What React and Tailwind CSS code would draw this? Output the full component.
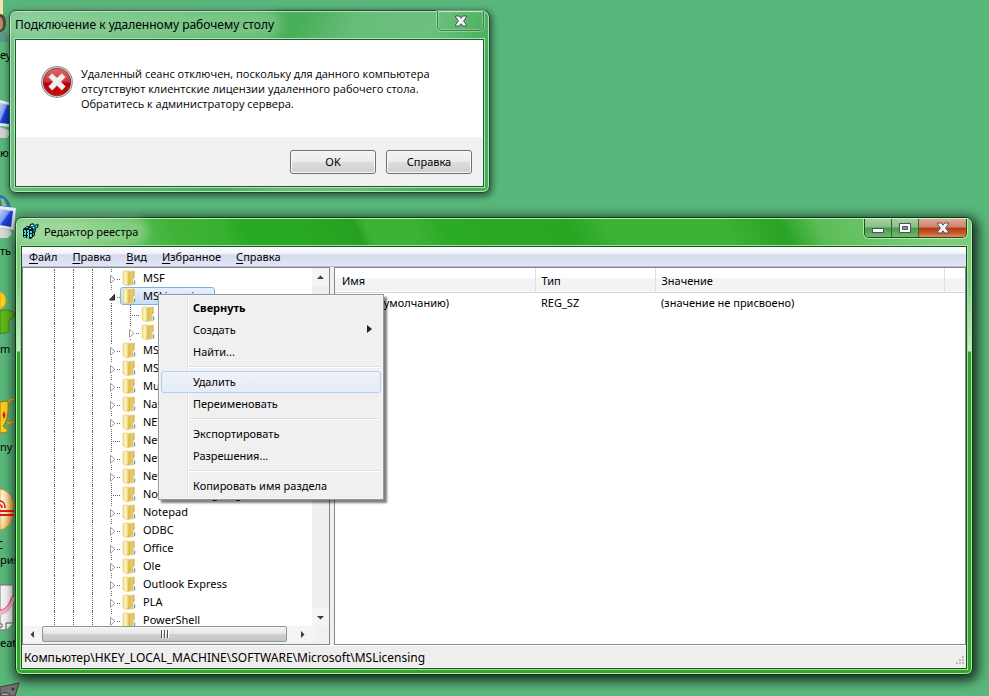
import React from "react";
import clsx from "clsx";

const treeRows = [
  { name: "MSF", arrow: "closed" },
  { name: "MSLicensing", arrow: "open", selected: true },
  { name: "HardwareID", child: true },
  { name: "Store", arrow: "closed", child: true },
  { name: "MSN Apps", arrow: "closed" },
  { name: "MSSQLServer", arrow: "closed" },
  { name: "Multimedia", arrow: "closed" },
  { name: "NapServer", arrow: "closed" },
  { name: "NET Framework Setup", arrow: "closed" },
  { name: "NetSh" },
  { name: "Network", arrow: "closed" },
  { name: "NetworkMap", arrow: "closed" },
  { name: "Non-Driver Signing" },
  { name: "Notepad", arrow: "closed" },
  { name: "ODBC", arrow: "closed" },
  { name: "Office", arrow: "closed" },
  { name: "Ole", arrow: "closed" },
  { name: "Outlook Express", arrow: "closed" },
  { name: "PLA", arrow: "closed" },
  { name: "PowerShell", arrow: "closed" },
];

const contextItems = [
  { label: "Свернуть", bold: true },
  { label: "Создать", submenu: true },
  { label: "Найти..." },
  null,
  { label: "Удалить", active: true },
  { label: "Переименовать" },
  null,
  { label: "Экспортировать" },
  { label: "Разрешения..." },
  null,
  { label: "Копировать имя раздела" },
];

const menus = ["Файл", "Правка", "Вид", "Избранное", "Справка"];

const CloseGlyph = () => (
  <svg width="14" height="12" viewBox="0 0 14 12">
    <path
      d="M1.5 1h3.800L7 3.200 8.700 1h3.800v1L9.600 6l2.900 4v1H8.700L7 8.800 5.300 11H1.500v-1L4.400 6 1.500 2z"
      fill="#f4f4f4"
      stroke="#4b5163"
      strokeWidth="1"
    />
  </svg>
);

const FolderIcon = () => (
  <svg width="16" height="16" viewBox="0 0 16 16" className="shrink-0">
    <defs>
      <linearGradient id="folderBack" x1="0" x2="1">
        <stop offset="0" stopColor="#f0dc86" />
        <stop offset=".5" stopColor="#e9d174" />
        <stop offset="1" stopColor="#d8b650" />
      </linearGradient>
      <linearGradient id="folderFront" x1="0" x2="1">
        <stop offset="0" stopColor="#f1dd85" />
        <stop offset=".5" stopColor="#fdf7c0" />
        <stop offset="1" stopColor="#e5ca62" />
      </linearGradient>
    </defs>
    <path d="M5 1.500L12.500 1v13.500L6 15.500z" fill="url(#folderBack)" stroke="#dcc97c" strokeWidth=".6" />
    <path d="M1 1.500L5 .7l1.500 1.500v12L5 15.700 1 14z" fill="url(#folderFront)" stroke="#dcc876" strokeWidth=".6" />
    <path d="M7 2l1.500-.5v12.500L5 15.700 6.500 14z" fill="#d9b850" />
    <path d="M11.500 8h1.500v6h-1.500z" fill="#fff" />
    <path d="M12 10.500h1.200V14H12z" fill="#46a5e2" />
  </svg>
);

const Toggle = ({ arrow }) => (
  <svg width="14" height="18" viewBox="0 0 14 18" className="shrink-0">
    {arrow ? (
      <g fill="#666">
        <path d="M5 0h1v1H5zM5 2h1v1H5zM5 16h1v1H5zM11 10h1v1h-1zM13 10h1v1h-1z" />
      </g>
    ) : (
      <g stroke="#666" strokeDasharray="1 1">
        <path d="M5.500 0v18M5 10.500h9" />
      </g>
    )}
    {arrow === "closed" && (
      <path d="M4.500 6.300v8l4.300-4z" fill="#fff" stroke="#9a9a9a" />
    )}
    {arrow === "open" && <path d="M8.500 7.500v5.500H3.500z" fill="#404040" stroke="#262626" />}
  </svg>
);

const Guide = ({ last }) => (
  <span
    className={clsx(
      "shrink-0 border-l border-dotted border-[#666]",
      last ? "w-[14px]" : "w-[19px]"
    )}
  />
);

const TreeRow = ({ name, arrow, child, selected }) => (
  <li className="flex h-[18px] pl-[31px]">
    <Guide />
    <Guide />
    {child && <Guide />}
    <Guide last />
    <Toggle arrow={arrow} />
    <button
      className={clsx(
        "flex items-center gap-[5px] whitespace-nowrap rounded-[3px] border pl-px pr-1.5",
        selected
          ? "border-[#84acdd] bg-linear-to-b from-[#e8f1fd] to-[#c6defb]"
          : "border-transparent"
      )}
    >
      <FolderIcon />
      <span className="pb-0.5">{name}</span>
    </button>
  </li>
);

const ScrollArrow = ({ d, label, className }) => (
  <button aria-label={label} className={clsx("flex items-center justify-center bg-[#f4f4f4]", className)}>
    <svg width="7" height="7" viewBox="0 0 7 7">
      <path d={d} fill="#3c3c3c" />
    </svg>
  </button>
);

const DialogButton = ({ children }) => (
  <button className="h-6 w-[86px] rounded-[3px] border border-[#707070] bg-[linear-gradient(#f3f3f3_0%,#ebebeb_50%,#dddddd_50%,#cfcfcf_100%)] text-center shadow-[inset_0_0_0_1px_#fafafa]">
    {children}
  </button>
);

const ErrorIcon = () => (
  <svg width="32" height="32" viewBox="0 0 32 32" className="shrink-0">
    <defs>
      <linearGradient id="errorRed" x1="0" y1="0" x2="0" y2="1">
        <stop offset="0" stopColor="#e0686b" />
        <stop offset=".48" stopColor="#cc363a" />
        <stop offset=".55" stopColor="#b40005" />
        <stop offset="1" stopColor="#c8140c" />
      </linearGradient>
    </defs>
    <circle cx="16" cy="16" r="15.300" fill="#f2f2f2" stroke="#8f9499" strokeWidth="1.200" />
    <circle cx="16" cy="16" r="13.800" fill="url(#errorRed)" stroke="#8d1a1c" strokeWidth=".8" />
    <path
      d="M7.500 11l3.700-3.500L16 12l4.800-4.500 3.700 3.500-4.700 4.800 4.700 4.700-3.700 3.700L16 19.600l-4.800 4.600-3.700-3.700 4.700-4.700z"
      fill="#efefef"
      stroke="#d6b5b5"
      strokeWidth=".5"
    />
  </svg>
);

const RegeditIcon = () => (
  <svg width="16" height="16" viewBox="0 0 16 16">
    <path d="M0 6l4-3 8 1v8l-4 4-8-2z" fill="#111" />
    <path
      d="M1 7h2v2H1zM4 7h2v2H4zM7 8h2v2H7zM1 10h2v2H1zM4 10h2v2H4zM1 13h2v1H1zM4 13h2v2H4zM7 11h2v3H7zM3 4h2v1H3zM6 5h2v1H6zM10 7h1v2h-1zM10 10h1v2h-1z"
      fill="#35dfe2"
    />
    <path d="M7 1.500l3-1 2 2 3-1.500v3l-2.500 1.500v3L10 10V6L7 4z" fill="#0a7d80" stroke="#111" strokeWidth=".8" />
    <path d="M8 2h2v1H8zM13 2.500h1v1h-1zM10 4h1v1h-1zM2 9h1v1H2zM5 9h1v1H5zM5 12h1v1H5z" fill="#bff" />
  </svg>
);

/* Shortcuts on the left edge of the desktop, mostly off-screen */
const DesktopIcons = () => (
  <div className="absolute left-0 top-0">
    <svg width="20" height="696" viewBox="0 0 20 696">
      <defs>
        <linearGradient id="screen" x1="0" y1="0" x2="1" y2="1">
          <stop offset="0" stopColor="#c3d3fb" />
          <stop offset=".4" stopColor="#7f9df2" />
          <stop offset=".5" stopColor="#1f41d6" />
          <stop offset="1" stopColor="#0b2bb4" />
        </linearGradient>
        <radialGradient id="ball" cx="0" cy=".35" r="1">
          <stop offset="0" stopColor="#fffdf4" />
          <stop offset=".5" stopColor="#fbe3ae" />
          <stop offset="1" stopColor="#f09a1c" />
        </radialGradient>
      </defs>
      <path d="M0 0h3v24H0z" fill="#f7e3ad" />
      <path d="M0 14c4 0 6 4 6 9s-2 9-6 9z" fill="#4f4339" />
      <path d="M0 17c2 0 3 3 3 7s-1 5-3 6z" fill="#b98a60" />
      <path d="M0 33l4-3c3 2 5 6 5 12H0z" fill="#5f9a8d" />

      <path d="M0 100l12 3v24l-12-1z" fill="#e8ebf2" />
      <path d="M0 103l9 2v19l-9-1z" fill="url(#screen)" />
      <path d="M0 127l8 3 2 4-3 4H0z" fill="#d3d3d3" />

      <path d="M0 195c6 1 10 6 11 14H0z" fill="#3568b8" />
      <path d="M0 198l4 1 3 7H2z" fill="#7fc069" />
      <path d="M0 206l16 2-2 22-14-2z" fill="#e8ebf2" />
      <path d="M0 209l13 2-2 16-11-2z" fill="url(#screen)" />
      <path d="M0 228l10 2 2 4-4 4H0z" fill="#dadada" />

      <path d="M0 311c5-2 11-1 15 2l-3 6-3 1v12l-9 2z" fill="#62b81b" stroke="#3e8c10" />
      <path d="M0 292c4 1 6 5 6 9s-3 7-6 8z" fill="#ffd21e" stroke="#d9a514" />

      <path d="M8 404c0-3 3-5 6-5M7 422c2 2 4 1 7-1" fill="none" stroke="#c98a10" strokeWidth="3" />
      <path d="M8 404c0-3 3-5 6-5M7 422c2 2 4 1 7-1" fill="none" stroke="#fbdc50" />
      <path d="M0 402l8-1c1 12-1 21-5 25l5 4c0 2-3 3-8 3z" fill="#f8d21e" stroke="#a96f09" />
      <path d="M4 411l1.500 4L4 419l-1.500-4z" fill="#d3151b" />

      <path d="M0 489c9 1 14 9 14 20s-6 20-14 21z" fill="url(#ball)" stroke="#d18a18" strokeWidth=".7" />
      <path d="M0 501c3 0 5 3 5 7M0 505c1 0 2 1 2 3" fill="none" stroke="#e01c1c" strokeWidth="1.500" />
      <path d="M0 511h14M0 515h14" stroke="#e01c1c" strokeWidth="2" />

      <path d="M0 585h13v38l-7 7H0z" fill="#f4f4f4" stroke="#777" />
      <path d="M0 613c7 0 10-7 13-16" fill="none" stroke="#f6b3c9" strokeWidth="4" />
      <path d="M0 610c6 0 10-7 13-15" fill="none" stroke="#e5336f" />
      <path d="M6 630v-7h7M0 624h2v3H0" fill="#fff" stroke="#555" />

      <path d="M0 687l19-4-4 13H0z" fill="#737373" stroke="#3f3f3f" />
      <path d="M0 695c3-3 7-3 10 0" fill="#aaa" stroke="#333" />
      <circle cx="13" cy="689" r="1.500" fill="#2b3b20" />
    </svg>
    <span className="absolute left-0 top-[47px]">еу</span>
    <span className="absolute left-0 top-[145px]">ю</span>
    <span className="absolute left-0 top-[243px]">ть</span>
    <span className="absolute left-0 top-[341px]">m</span>
    <span className="absolute left-0 top-[439px]">ny</span>
    <span className="absolute -left-1 top-[537px]">С</span>
    <span className="absolute left-0 top-[552px]">рия</span>
    <span className="absolute left-0 top-[635px]">eat</span>
  </div>
);

const ErrorDialog = () => (
  <section
    aria-label="Подключение к удаленному рабочему столу"
    className="absolute left-[9px] top-[10px] flex w-[481px] flex-col rounded-[7px] border border-[#1d4a2c] bg-[linear-gradient(115deg,#74c586_0%,#62bd74_20%,#52b663_44%,#48ae59_52%,#66bd78_62%,#6cc07e_76%,#45b058_88%)] px-[5px] pb-[5px] shadow-[inset_0_0_0_1px_#b5e3bd,1px_2px_7px_1px_rgba(0,0,0,0.55)]"
  >
    <header className="flex h-7 items-start justify-between">
      <h1 className="mt-1.5 rounded-full bg-white/20 text-xs leading-[15px] shadow-[0_0_9px_7px_rgba(255,255,255,0.2)]">
        Подключение к удаленному рабочему столу
      </h1>
      <button
        aria-label="Закрыть"
        className="flex h-5 w-[47px] items-center justify-center rounded-b-[5px] border border-t-0 border-[#3d7e4c] shadow-[inset_0_0_0_1px_rgba(255,255,255,0.25),0_0_0_1px_rgba(200,240,205,0.5)]"
      >
        <CloseGlyph />
      </button>
    </header>
    <div className="border border-[#1d5a2b] shadow-[0_0_0_1px_#b0e2b8]">
      <div className="flex h-[97px] gap-2 bg-white pl-[25px] pt-[26px]">
        <ErrorIcon />
        <p className="font-['Open_Sans','Noto_Sans',sans-serif]">
          Удаленный сеанс отключен, поскольку для данного компьютера
          <br />
          отсутствуют клиентские лицензии удаленного рабочего стола.
          <br />
          Обратитесь к администратору сервера.
        </p>
      </div>
      <div className="flex h-[49px] items-center justify-end gap-2.5 bg-[#f0f0f0] pr-[11px]">
        <DialogButton>OK</DialogButton>
        <DialogButton>Справка</DialogButton>
      </div>
    </div>
  </section>
);

const ContextMenu = () => (
  <ul
    role="menu"
    className="absolute left-[142px] top-[76px] w-[226px] border border-[#979797] bg-[#f0f0f0] bg-[linear-gradient(90deg,transparent_28px,#e2e3e3_28px,#e2e3e3_29px,#fff_29px,#fff_30px,transparent_30px)] p-0.5 shadow-[inset_0_0_0_1px_#f5f5f5,3px_3px_2px_rgba(0,0,0,0.5)]"
  >
    {contextItems.map((item, i) =>
      item ? (
        <li key={i} role="none">
          <button
            role="menuitem"
            className={clsx(
              "flex h-[22px] w-full items-center justify-between rounded-[3px] border pb-0.5 pl-[31px] pr-2",
              item.active
                ? "border-[#aecff7] bg-linear-to-b from-[#f0f3f8]/80 to-[#e2ebf6]/80"
                : "border-transparent",
              item.bold && "font-bold"
            )}
          >
            {item.label}
            {item.submenu && (
              <svg width="5" height="8" viewBox="0 0 5 8">
                <path d="M0 0l5 4-5 4z" fill="#222" />
              </svg>
            )}
          </button>
        </li>
      ) : (
        <li key={i} role="separator" className="flex h-2 items-center pl-7">
          <span className="h-0.5 w-full border-b border-white bg-[#e0e0e0]" />
        </li>
      )
    )}
  </ul>
);

const Tree = () => (
  <nav
    aria-label="Разделы реестра"
    className="flex w-[308px] shrink-0 flex-col border border-[#828790] bg-white"
  >
    <div className="flex min-h-0 flex-1">
      <ul className="min-w-0 flex-1 overflow-hidden pt-px">
        {treeRows.map((row) => (
          <TreeRow key={row.name} {...row} />
        ))}
      </ul>
      <div className="flex w-[17px] shrink-0 flex-col justify-between bg-[#efefef]">
        <ScrollArrow label="Вверх" d="M0 5h7L3.500 1.500z" className="h-[18px]" />
        <ScrollArrow label="Вниз" d="M0 2h7L3.500 5.500z" className="h-[18px]" />
      </div>
    </div>
    <div className="flex h-[18px] shrink-0 bg-[#f0f0f0] pb-0.5 pr-3">
      <ScrollArrow label="Влево" d="M5 0v7L1.500 3.500z" className="w-[19px]" />
      <div className="flex w-[245px] items-center justify-center gap-px rounded-[2px] border border-[#979797] bg-[linear-gradient(#f5f5f5_0%,#e6e6e6_50%,#d2d2d2_50%,#c4c4c6_100%)]">
        <span className="h-2 w-0.5 border-l border-[#555] bg-white" />
        <span className="h-2 w-0.5 border-l border-[#555] bg-white" />
        <span className="h-2 w-0.5 border-l border-[#555] bg-white" />
      </div>
      <ScrollArrow label="Вправо" d="M2 0v7L5.500 3.500z" className="flex-1" />
    </div>
  </nav>
);

const ValueList = () => (
  <div className="min-w-0 flex-1 border border-[#828790] bg-white">
    <table className="w-full table-fixed border-collapse text-left">
      <thead>
        <tr className="h-6 border-b border-[#d5d5d5] bg-[linear-gradient(#ffffff_45%,#f4f5f7_45%,#f1f2f4_100%)]">
          <th className="w-[200px] border-r border-[#dedfe1] pl-[7px] pt-px font-normal">Имя</th>
          <th className="w-[120px] border-r border-[#dedfe1] pl-1.5 pt-px font-normal">Тип</th>
          <th className="border-r border-[#dedfe1] pl-1.5 pt-px font-normal">Значение</th>
          <th className="w-[21px]" />
        </tr>
      </thead>
      <tbody>
        <tr className="h-5">
          <td className="pl-7">(По умолчанию)</td>
          <td className="pl-1.5">REG_SZ</td>
          <td className="pl-1.5">(значение не присвоено)</td>
          <td />
        </tr>
      </tbody>
    </table>
  </div>
);

const RegistryWindow = () => (
  <section
    aria-label="Редактор реестра"
    className="absolute bottom-[21px] left-[15px] right-4 top-[217px] flex flex-col rounded-[7px] border border-[#0c3a12] bg-[linear-gradient(180deg,#7acb78_0,#80cc7e_60px,#c6eac4_133px,#2fa829_134px)] px-[5px] pb-[5px] shadow-[inset_0_0_0_1px_#b5e8b3,2px_3px_12px_3px_rgba(0,0,0,0.75)]"
  >
    <header className="-mx-1 mt-px flex h-[27px] shrink-0 items-start justify-between rounded-t-[5px] bg-[linear-gradient(65deg,#7bcb79_0%,#7bcb79_6%,#3fb338_17%,#38b032_22%,#29aa24_24%,#29aa24_29%,#27a021_36%,#3bb135_37%,#3bb135_42%,#2cab26_45%,#29a524_58%,#3cb236_62%,#3cb236_74%,#29a324_80%,#5cbd58_84%,#7ccc7a_95%)] px-1"
    >
      <h2 className="mt-1 flex items-center gap-[5px] rounded-full bg-white/25 pl-0.5 pr-1 shadow-[0_0_9px_6px_rgba(255,255,255,0.25)]">
        <RegeditIcon />
        Редактор реестра
      </h2>
      <div className="flex h-[19px] rounded-b-[5px] border border-t-0 border-[#1f4c20] shadow-[0_0_0_1px_rgba(210,245,210,0.7)]">
        <button
          aria-label="Свернуть окно"
          className="flex w-[27px] items-center justify-center rounded-bl-[4px] border-r border-[#33663a] bg-[linear-gradient(#a4d2a1_0%,#86bf84_45%,#4c9a4a_50%,#6fbb6c_100%)]"
        >
          <svg width="12" height="12" viewBox="0 0 12 12">
            <path d="M.5 6.500h11v4H.5z" fill="#fff" stroke="#4b5163" />
          </svg>
        </button>
        <button
          aria-label="Развернуть"
          className="flex w-[27px] items-center justify-center border-r border-[#33663a] bg-[linear-gradient(#a4d2a1_0%,#86bf84_45%,#4c9a4a_50%,#6fbb6c_100%)]"
        >
          <svg width="12" height="10" viewBox="0 0 12 10">
            <path d="M.5.5h11v9H.5z" fill="#fff" stroke="#4b5163" />
            <path d="M3.500 3.500h5v3h-5z" fill="#79a87c" stroke="#4b5163" />
          </svg>
        </button>
        <button
          aria-label="Закрыть"
          className="flex w-[47px] items-center justify-center rounded-br-[4px] bg-[linear-gradient(#e3a896_0%,#cf836c_45%,#b53a12_50%,#c95a2e_80%,#db8f62_100%)]"
        >
          <CloseGlyph />
        </button>
      </div>
    </header>
    <div className="flex min-h-0 flex-1 flex-col border border-[#14551a] bg-[#f0f0f0] shadow-[0_0_0_1px_#a5dfa3]">
      <div
        role="menubar"
        className="flex h-5 shrink-0 gap-px border-b border-[#b6bccc] bg-[linear-gradient(#ffffff_0%,#eef1f8_38%,#d4dbed_40%,#e1e6f6_100%)]"
      >
        {menus.map((name) => (
          <button key={name} role="menuitem" className="px-[7px]">
            <span className="underline underline-offset-2">{name[0]}</span>
            {name.slice(1)}
          </button>
        ))}
      </div>
      <div className="flex min-h-0 flex-1 gap-1">
        <Tree />
        <ValueList />
      </div>
      <footer className="flex h-[23px] shrink-0 items-center justify-between border-y border-white bg-[#f0eded] pl-0.5">
        <span className="pt-px text-xs leading-[15px]">
          Компьютер\HKEY_LOCAL_MACHINE\SOFTWARE\Microsoft\MSLicensing
        </span>
        <svg width="12" height="12" viewBox="0 0 12 12" className="self-end">
          <path
            d="M8 1h2v2H8zM5 4h2v2H5zM8 4h2v2H8zM2 7h2v2H2zM5 7h2v2H5zM8 7h2v2H8z"
            fill="#bcb9b9"
          />
        </svg>
      </footer>
    </div>
    <ContextMenu />
  </section>
);

const App = () => (
  <main className="relative min-h-screen overflow-hidden bg-[#5ab77b] font-['Noto_Sans','Open_Sans',sans-serif] text-[11px] leading-[15px] text-black">
    <DesktopIcons />
    <ErrorDialog />
    <RegistryWindow />
  </main>
);

export default App;
